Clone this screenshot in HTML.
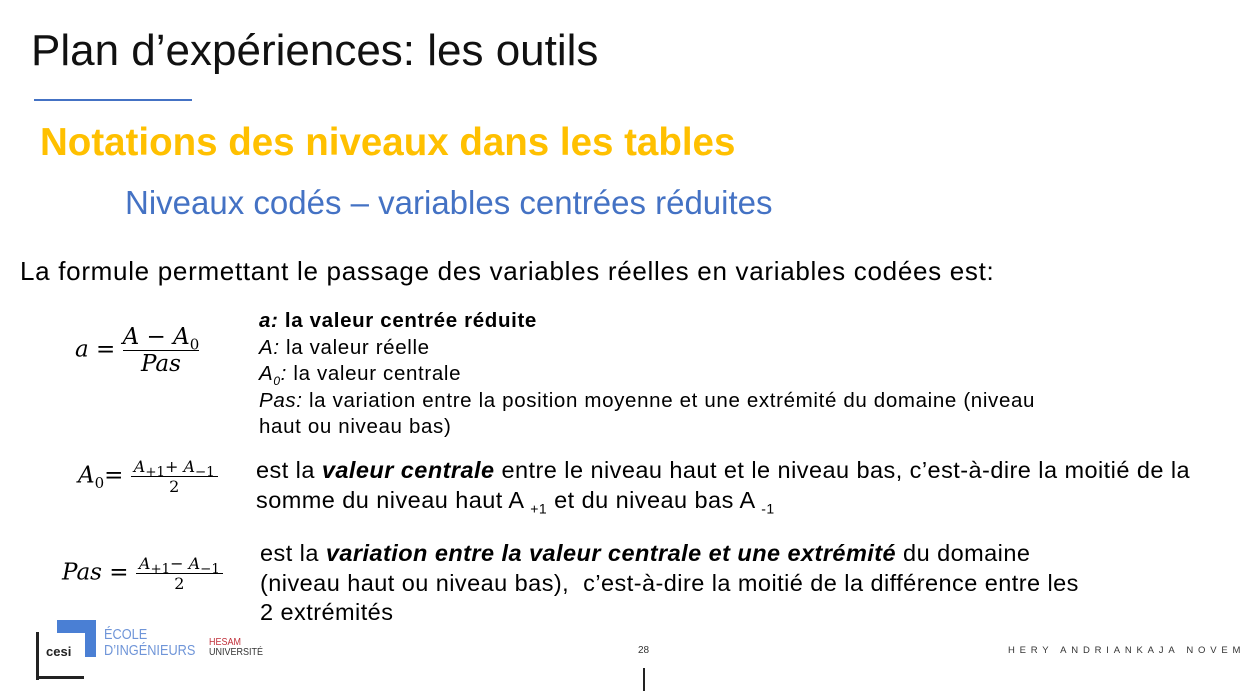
<!DOCTYPE html>
<html><head><meta charset="utf-8"><style>
body{margin:0;width:1241px;height:691px;background:#fff;position:relative;overflow:hidden;font-family:"Liberation Sans",Arial,sans-serif;color:#000}
.a{position:absolute;white-space:nowrap}
.m{font-family:"DejaVu Serif","Liberation Serif",serif;font-style:italic}
.fr{display:inline-block;text-align:center;vertical-align:middle}
.fr>span{display:block}
.fr>.n{border-bottom:1.5px solid #000}
sub{line-height:0}
</style></head><body>
<div class="a" style="left:31px;top:26px;font-size:44px;color:#111">Plan d’expériences: les outils</div>
<div class="a" style="left:34px;top:99px;width:158px;height:2px;background:#4472c4"></div>
<div class="a" style="left:40px;top:121px;font-size:38.5px;font-weight:bold;color:#ffc000">Notations des niveaux dans les tables</div>
<div class="a" style="left:125px;top:184px;font-size:33px;color:#4472c4">Niveaux codés – variables centrées réduites</div>
<div class="a" style="left:20px;top:256px;font-size:26px;letter-spacing:0.7px">La formule permettant le passage des variables réelles en variables codées est:</div>

<div class="a m" style="left:75px;top:324px;font-size:23px;font-style:normal"><i>a</i> = <span class="fr"><span class="n"><i>A</i> − <i>A</i><sub style="font-size:15px;font-style:normal">0</sub></span><span><i>Pas</i></span></span></div>

<div class="a" style="left:259px;top:308px;font-size:20.5px;letter-spacing:0.65px;line-height:26.5px">
<b><i>a:</i> la valeur centrée réduite</b><br>
<i>A:</i> la valeur réelle<br>
<i>A<sub style="font-size:12px">0</sub>:</i> la valeur centrale<br>
<i>Pas:</i> la variation entre la position moyenne et une extrémité du domaine (niveau<br>
haut ou niveau bas)</div>

<div class="a m" style="left:78px;top:457px;font-size:23px;font-style:normal"><i>A</i><sub style="font-size:15px">0</sub>= <span class="fr" style="font-size:16px"><span class="n" style="padding:0 3px"><i>A</i><sub>+1</sub>+ <i>A</i><sub>−1</sub></span><span>2</span></span></div>
<div class="a" style="left:256px;top:455px;font-size:23.5px;letter-spacing:0.45px;line-height:30px">est la <b><i>valeur centrale</i></b> entre le niveau haut et le niveau bas, c’est-à-dire la moitié de la<br>somme du niveau haut A <sub style="font-size:14px">+1</sub> et du niveau bas A <sub style="font-size:14px">-1</sub></div>

<div class="a m" style="left:62px;top:554px;font-size:23px;font-style:normal"><i>Pas</i> = <span class="fr" style="font-size:16px"><span class="n" style="padding:0 3px"><i>A</i><sub>+1</sub>− <i>A</i><sub>−1</sub></span><span>2</span></span></div>
<div class="a" style="left:260px;top:539px;font-size:23.5px;letter-spacing:0.45px;line-height:29.5px">est la <b><i>variation entre la valeur centrale et une extrémité</i></b> du domaine<br>(niveau haut ou niveau bas),&nbsp; c’est-à-dire la moitié de la différence entre les<br>2 extrémités</div>

<!-- logo -->
<div class="a" style="left:57px;top:620px;width:39px;height:37px;background:#4a7fd4"></div>
<div class="a" style="left:42px;top:633px;width:43px;height:30px;background:#fff"></div>
<div class="a" style="left:36px;top:632px;width:3px;height:48px;background:#222"></div>
<div class="a" style="left:36px;top:676px;width:48px;height:3px;background:#222"></div>
<div class="a" style="left:46px;top:644px;font-size:13px;font-weight:bold;color:#222">cesi</div>
<div class="a" style="left:104px;top:627px;font-size:15px;line-height:16px;color:#6f95d8;transform:scaleX(0.85);transform-origin:left">ÉCOLE<br>D’INGÉNIEURS</div>
<div class="a" style="left:209px;top:638px;font-size:10px;line-height:10px;color:#c0303a;transform:scaleX(0.9);transform-origin:left">HESAM<br><span style="color:#333">UNIVERSITÉ</span></div>

<div class="a" style="left:638px;top:645px;font-size:10px;color:#333">28</div>
<div class="a" style="left:643px;top:668px;width:2px;height:23px;background:#222"></div>
<div class="a" style="left:1008px;top:645px;font-size:9.5px;letter-spacing:4.8px;color:#333">HERY ANDRIANKAJA NOVEMBRE</div>
</body></html>
